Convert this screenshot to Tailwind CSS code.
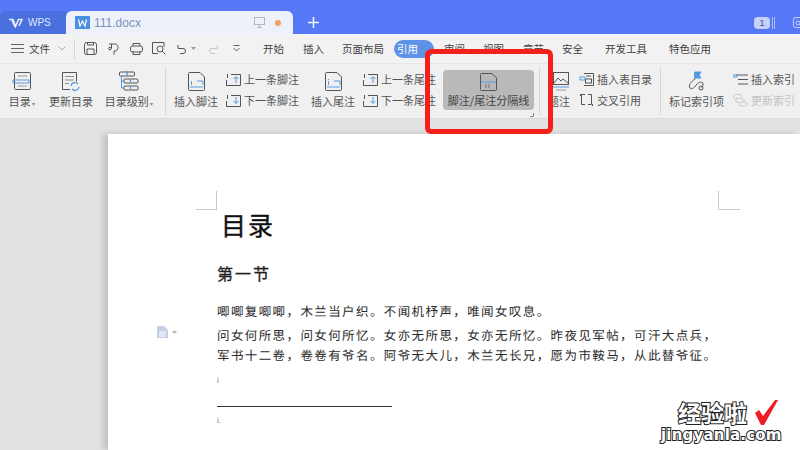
<!DOCTYPE html>
<html lang="zh">

<head>
    <meta charset="UTF-8">
    <meta name="viewport" content="width=device-width, initial-scale=1.0">
    <script src="https://cdn.jsdelivr.net/npm/@tailwindcss/browser@4"></script>
    <title>111.docx</title>
</head>

<body class="relative w-[800px] h-[450px] overflow-hidden bg-[#e2e2e2] font-['Noto_Sans_CJK_SC','Noto_Sans',sans-serif] text-[#444]">

    <!-- Barra de pestañas -->
    <div class="flex items-end h-[34px] bg-[#5778f6]">
        <div class="flex items-center w-[66px] h-[23px] pl-2 gap-[5px] bg-[#4a70de] rounded-tl-md text-[#dfe7fb] text-[10px] font-['Liberation_Sans',sans-serif]">
            <svg class="w-[15px] h-[10px]" viewBox="0 0 15 10" fill="none" stroke="#e6ecfc" stroke-width="1.6"><path d="M1 1.500h4l2.500 7 3-7H14L11 8" /><path d="M4 2 7 9" /></svg>
            <span>WPS</span>
        </div>
        <div class="flex items-center w-[227px] h-[23px] pl-[9px] bg-[#eef1fa] rounded-t-md">
            <svg class="w-[15px] h-[13px]" viewBox="0 0 15 13"><rect width="15" height="13" fill="#4a90e2" /><path d="M3.500 3.500 5 10l2.500-5L10 10l1.500-6.500" fill="none" stroke="#fff" stroke-width="1.200" /></svg>
            <span class="ml-1 text-[12px] text-[#7a93bd] font-['Liberation_Sans',sans-serif]">111.docx</span>
            <svg class="ml-[113px] w-[11px] h-[11px]" viewBox="0 0 11 11" fill="none" stroke="#aeb6c4"><rect x=".5" y=".5" width="10" height="7" /><path d="M5.500 7.500v3M3 10.500h5" /></svg>
            <span class="ml-[10px] w-[6px] h-[6px] rounded-full bg-[#eda35f]"></span>
        </div>
        <svg class="ml-[15px] mb-[6px] w-[11px] h-[11px]" viewBox="0 0 11 11" stroke="#f2f5ff" stroke-width="1.500"><path d="M5.500 0v11M0 5.500h11" /></svg>
        <div class="flex items-center ml-auto mb-[5px]">
            <span class="w-[16px] h-[12px] rounded-sm bg-[#c6d2fa] text-[9px] leading-[12px] text-center text-[#3c4f8c] font-['Liberation_Sans',sans-serif]">1</span>
            <span class="ml-[2px] w-[3px] h-[12px] border-x border-[#aabcf8]"></span>
            <svg class="ml-[18px] w-[7px] h-[12px]" viewBox="0 0 7 12" fill="none" stroke="#c6d2fa"><rect x=".5" y=".5" width="9" height="10" rx="2" /><circle cx="5" cy="6" r="2" /></svg>
        </div>
    </div>

    <!-- Barra de menú -->
    <div class="flex items-center h-[30px] bg-[#f2f2f2] border-b border-[#e6e6e6] text-[10.500px] text-[#3f3f3f]">
        <svg class="ml-[11px] w-[13px] h-[9px]" viewBox="0 0 13 9" stroke="#666"><path d="M0 .5h13M0 4.500h13M0 8.500h13" /></svg>
        <span class="ml-[5px] w-[22px] whitespace-nowrap">文件</span>
        <svg class="ml-[7px] w-[8px] h-[5px]" viewBox="0 0 8 5" fill="none" stroke="#aaa"><path d="M.5.5 4 4 7.500.5" /></svg>
        <span class="ml-[8px] w-px h-[20px] bg-[#d4d4d4]"></span>
        <svg class="ml-[9px] w-[13px] h-[13px]" viewBox="0 0 13 13" fill="none" stroke="#555"><rect x=".5" y=".5" width="12" height="12" rx="2" /><path d="M3 12.500V7h7v5.500M3.500 .5v2.500h6V.5" /></svg>
        <svg class="ml-[11px] w-[13px] h-[13px]" viewBox="0 0 13 13" fill="none" stroke="#555"><path d="M1 2h7a4 4 0 0 1 0 7H6v3.500M3.500 2v4.500" /><circle cx="2" cy="6.500" r="1.300" /></svg>
        <svg class="ml-[9px] w-[13px] h-[12px]" viewBox="0 0 13 12" fill="none" stroke="#555"><rect x=".5" y="3" width="12" height="6" rx="2" /><path d="M3 3V.5h7V3M3 8v3.500h7V8" /></svg>
        <svg class="ml-[9px] w-[14px] h-[13px]" viewBox="0 0 14 13" fill="none" stroke="#555"><path d="M12 5V.5H.5v11H6" /><circle cx="8" cy="7" r="3" /><path d="m10 9 3.500 3.500" /></svg>
        <svg class="ml-[11px] w-[11px] h-[10px]" viewBox="0 0 11 10" fill="none" stroke="#555"><path d="M1 1v3.500h5a2.500 2.500 0 0 1 0 5H3" /></svg>
        <svg class="ml-[3px] w-[5px] h-[3px]" viewBox="0 0 5 3" fill="#999"><path d="M0 0h5L2.500 3z" /></svg>
        <svg class="ml-[11px] w-[11px] h-[10px]" viewBox="0 0 11 10" fill="none" stroke="#c4c4c4"><path d="M10 1v3.500H5a2.500 2.500 0 0 0 0 5h3" /></svg>
        <svg class="ml-[15px] w-[7px] h-[7px]" viewBox="0 0 7 7" fill="none" stroke="#666"><path d="M.5.5h6M.5 3 3.500 6 6.500 3" /></svg>
        <span class="ml-[23px] w-[22px] whitespace-nowrap">开始</span>
        <span class="ml-[18px] w-[22px] whitespace-nowrap">插入</span>
        <span class="ml-[17px] w-[42px] whitespace-nowrap">页面布局</span>
        <span class="ml-[10px] w-[40px] h-[18px] pl-[3px] leading-[18px] whitespace-nowrap rounded-full bg-[#5f93e8] text-white">引用</span>
        <span class="ml-[10px] w-[21px] whitespace-nowrap">审阅</span>
        <span class="ml-[18px] w-[22px] whitespace-nowrap">视图</span>
        <span class="ml-[18px] w-[22px] whitespace-nowrap">章节</span>
        <span class="ml-[17px] w-[22px] whitespace-nowrap">安全</span>
        <span class="ml-[21px] w-[43px] whitespace-nowrap">开发工具</span>
        <span class="ml-[21px] w-[43px] whitespace-nowrap">特色应用</span>
    </div>

    <!-- Cinta de opciones -->
    <div class="flex items-stretch h-[55px] bg-[#f0f0f0] border-b border-[#dadada] text-[11px] text-[#555] whitespace-nowrap">
        <div class="ml-[8px] w-[28px] pt-[8px] flex flex-col items-center">
            <svg class="w-[20px] h-[19px]" viewBox="0 0 20 19" fill="none" stroke="#555"><rect x="2.500" y=".5" width="16" height="17" rx="1" /><path d="M6 4h9" stroke="#999" /><path d="M1 8h16v3H1z" stroke="#5b9be6" /><path d="M6 14h9" stroke="#999" /></svg>
            <span class="mt-[3px] leading-[15px]">目录<span class="text-[6px] text-[#888]"> ▾</span></span>
        </div>
        <div class="ml-[13px] w-[44px] pt-[8px] flex flex-col items-center">
            <svg class="w-[20px] h-[19px]" viewBox="0 0 20 19" fill="none" stroke="#555"><path d="M9 17.500H1.500V.5h14v9" /><path d="M4 4.500h9M4 8h9M4 11.500h4" stroke="#888" /><path d="M10 14a4 4 0 0 1 7-2M18 15a4 4 0 0 1-7 2" stroke="#4f9ae6" stroke-width="1.300" /></svg>
            <span class="mt-[3px] leading-[15px]">更新目录</span>
        </div>
        <div class="ml-[11px] w-[50px] pt-[7px] flex flex-col items-center">
            <svg class="w-[20px] h-[20px]" viewBox="0 0 20 20" fill="none" stroke="#555"><rect x=".5" y="1" width="15" height="4" rx="1" /><rect x="5" y="8" width="14" height="4" rx="1" /><rect x="5" y="15" width="14" height="4" rx="1" /><path d="M2.500 5v12H5M2.500 10H5" stroke="#4f9ae6" /><path d="M8 0v5M11.500 9v2M11.500 16v2" stroke="#4f9ae6" stroke-width="1.300" /></svg>
            <span class="mt-[3px] leading-[15px]">目录级别<span class="text-[6px] text-[#888]"> ▾</span></span>
        </div>
        <span class="ml-[11px] my-[3px] w-px bg-[#d6d6d6]"></span>
        <div class="ml-[8px] w-[44px] pt-[8px] flex flex-col items-center">
            <svg class="w-[17px] h-[19px]" viewBox="0 0 17 19" fill="none" stroke="#555"><path d="M.5 1.500a1 1 0 0 1 1-1H12L16.500 5v12.500a1 1 0 0 1-1 1h-14a1 1 0 0 1-1-1z" /><path d="M2 15h13" stroke="#5b9be6" /><path d="M3.500 9v4M9 9h6v4" stroke="#5b9be6" /></svg>
            <span class="mt-[3px] leading-[15px]">插入脚注</span>
        </div>
        <div class="ml-[8px] w-[73px] pt-[8px] flex flex-col gap-[6px]">
            <div class="flex items-center h-[15px] gap-[3px]">
                <svg class="w-[15px] h-[13px]" viewBox="0 0 15 13" fill="none" stroke="#555"><path d="M5 1.500h9.500v11H.5V7M1.500 1v4" /><path d="M10 10V4M7.500 6 10 3.500 12.500 6" stroke="#4f9ae6" /></svg>
                <span>上一条脚注</span>
            </div>
            <div class="flex items-center h-[15px] gap-[3px]">
                <svg class="w-[15px] h-[13px]" viewBox="0 0 15 13" fill="none" stroke="#555"><path d="M5 1.500h9.500v11H.5V7M1.500 1v4" /><path d="M10 3v6M7.500 7 10 9.500 12.500 7" stroke="#4f9ae6" /></svg>
                <span>下一条脚注</span>
            </div>
        </div>
        <div class="ml-[12px] w-[44px] pt-[8px] flex flex-col items-center">
            <svg class="w-[17px] h-[19px]" viewBox="0 0 17 19" fill="none" stroke="#555"><path d="M.5 1.500a1 1 0 0 1 1-1H12L16.500 5v12.500a1 1 0 0 1-1 1h-14a1 1 0 0 1-1-1z" /><path d="M2 15h13" stroke="#5b9be6" /><path d="M3.500 7v1M3.500 9v4M9 9h6v4" stroke="#5b9be6" /></svg>
            <span class="mt-[3px] leading-[15px]">插入尾注</span>
        </div>
        <div class="ml-[8px] w-[73px] pt-[8px] flex flex-col gap-[6px]">
            <div class="flex items-center h-[15px] gap-[3px]">
                <svg class="w-[15px] h-[13px]" viewBox="0 0 15 13" fill="none" stroke="#555"><path d="M5 1.500h9.500v11H.5V7M1.500 1v4" /><path d="M10 10V4M7.500 6 10 3.500 12.500 6" stroke="#4f9ae6" /></svg>
                <span>上一条尾注</span>
            </div>
            <div class="flex items-center h-[15px] gap-[3px]">
                <svg class="w-[15px] h-[13px]" viewBox="0 0 15 13" fill="none" stroke="#555"><path d="M5 1.500h9.500v11H.5V7M1.500 1v4" /><path d="M10 3v6M7.500 7 10 9.500 12.500 7" stroke="#4f9ae6" /></svg>
                <span>下一条尾注</span>
            </div>
        </div>
        <!-- Botón activo -->
        <div class="ml-[7px] mt-[6px] w-[91px] h-[40px] pt-[3px] flex flex-col items-center rounded bg-[#b9b9b9] text-[#444]">
            <svg class="w-[17px] h-[18px]" viewBox="0 0 17 18" fill="none" stroke="#555"><path d="M.5 1.500a1 1 0 0 1 1-1H12L16.500 5v11.500a1 1 0 0 1-1 1h-14a1 1 0 0 1-1-1z" /><path d="M1 9h15" stroke="#5b9be6" /><path d="M6 11v4M9 11v4" stroke="#777" /></svg>
            <span class="mt-[2px] leading-[15px]">脚注/尾注分隔线</span>
        </div>
        <span class="ml-[5px] my-[3px] w-px bg-[#d6d6d6]"></span>
        <div class="ml-[7px] w-[23px] pt-[8px] flex flex-col items-end">
            <svg class="mr-[1px] w-[16px] h-[19px]" viewBox="0 0 16 19" fill="none" stroke="#555"><rect x=".5" y=".5" width="15" height="12" /><path d="m1 11 4-5 3 3 2-2 5 4" /><path d="M0 15h16" stroke="#5b9be6" /><path d="M3 18h10" stroke="#999" /></svg>
            <span class="mt-[3px] leading-[15px]">题注</span>
        </div>
        <div class="ml-[9px] w-[74px] pt-[8px] flex flex-col gap-[6px]">
            <div class="flex items-center h-[15px] gap-[3px]">
                <svg class="w-[15px] h-[13px]" viewBox="0 0 15 13" fill="none" stroke="#555"><path d="M5 .5h9.500v12H5" /><rect x="6.500" y="6" width="6" height="4" /><path d="M7 3h5" /><path d="M1 4h5v3H1z" stroke="#4f9ae6" /></svg>
                <span>插入表目录</span>
            </div>
            <div class="flex items-center h-[15px] gap-[3px]">
                <svg class="w-[15px] h-[13px]" viewBox="0 0 15 13" fill="none" stroke="#555"><path d="M6 .5H2.500v10H6M9 .5h3.500v10H9" /><path d="M1 1h1M13 11h1" stroke-width="2" /></svg>
                <span>交叉引用</span>
            </div>
        </div>
        <span class="ml-[7px] my-[3px] w-px bg-[#d6d6d6]"></span>
        <div class="ml-[8px] w-[55px] pt-[7px] flex flex-col items-center">
            <svg class="w-[20px] h-[20px]" viewBox="0 0 20 20" fill="none" stroke="#555"><path d="M8 8V1" /><path d="M8 1h6l-2 3 2 3H8z" fill="#4f9ae6" stroke="#4f9ae6" /><path d="M8 8c-4 3-7 6-5 9 2 2 5-1 7-4 2-2 6-3 6 0 0 2-1 3-2 3" /><circle cx="14" cy="17" r="2" /></svg>
            <span class="mt-[3px] leading-[15px]">标记索引项</span>
        </div>
        <div class="ml-[9px] pt-[8px] flex flex-col gap-[6px]">
            <div class="flex items-center h-[15px] gap-[3px]">
                <svg class="w-[15px] h-[13px]" viewBox="0 0 15 13" fill="none" stroke="#555"><path d="M3 2h12M5 6.500h10M5 11h10" /><path d="M0 2h4v2H0z" stroke="#4f9ae6" /></svg>
                <span>插入索引</span>
            </div>
            <div class="flex items-center h-[15px] gap-[3px] text-[#c2c2c2]">
                <svg class="w-[15px] h-[13px]" viewBox="0 0 15 13" fill="none" stroke="#c8c8c8"><rect x=".5" y=".5" width="8" height="4" rx="2" /><rect x="6" y="8" width="8" height="4" rx="2" /><path d="M3 5v3h3M11 8V5H8" /></svg>
                <span>更新索引</span>
            </div>
        </div>
    </div>

    <!-- Área del documento -->
    <div class="flex h-[331px] pt-[15px]">
        <div class="w-[108px] shrink-0"></div>
        <div class="relative flex-1 bg-white pl-[109px] shadow-[-5px_0_6px_rgba(0,0,0,0.14)] text-[#222]">
            <!-- Marcas de margen -->
            <div class="absolute left-[88px] top-[57px] w-[21px] h-[19px] border-r border-b border-[#c8c8c8]"></div>
            <div class="absolute left-[610px] top-[57px] w-[22px] h-[19px] border-l border-b border-[#c8c8c8]"></div>
            <!-- Icono de margen -->
            <div class="absolute left-[49px] top-[192px] flex items-center gap-[4px]">
                <svg class="w-[11px] h-[12px]" viewBox="0 0 11 12"><path d="M0 0h7l4 4v8H0z" fill="#c3d0e6" /><path d="M2 6h7M2 8h7M2 10h7" stroke="#fff" /></svg>
                <svg class="w-[5px] h-[3px]" viewBox="0 0 5 3" fill="#b4b4b4"><path d="M0 0h5L2.500 3z" /></svg>
            </div>

            <h1 class="pt-[72px] pl-[4px] h-[126px] text-[25px] leading-[36px] tracking-[2px] font-normal text-[#111] [-webkit-text-stroke:0.4px_#111]">目录</h1>
            <h2 class="mt-[-1px] h-[37px] text-[16px] leading-[28px] tracking-[2px] font-normal text-[#222] [-webkit-text-stroke:0.3px_#222]">第一节</h2>
            <div class="mt-[5px] text-[12.500px] tracking-[1.400px] whitespace-nowrap text-[#2a2a2a] [text-rendering:geometricPrecision]">
                <p class="h-[24px] leading-[20px]">唧唧复唧唧，木兰当户织。不闻机杼声，唯闻女叹息。</p>
                <p class="h-[20px] leading-[20px]">问女何所思，问女何所忆。女亦无所思，女亦无所忆。昨夜见军帖，可汗大点兵，</p>
                <p class="h-[20px] leading-[20px]">军书十二卷，卷卷有爷名。阿爷无大儿，木兰无长兄，愿为市鞍马，从此替爷征。</p>
            </div>
            <p class="mt-[9px] h-[14px] text-[8px] leading-[14px] text-[#777] [text-rendering:geometricPrecision] font-['Liberation_Sans',sans-serif]">i</p>
            <div class="mt-[18px] w-[175px] border-t border-[#333]"></div>
            <p class="mt-[7px] text-[8px] leading-[14px] text-[#777] [text-rendering:geometricPrecision] font-['Liberation_Sans',sans-serif]">i.</p>
        </div>
    </div>

    <!-- Recuadro rojo de anotación -->
    <div class="absolute left-[425px] top-[49px] w-[128px] h-[85px] border-[5px] border-[#f4201a] rounded-md">
        <svg class="absolute right-[14px] bottom-[12px] w-[4px] h-[4px]" viewBox="0 0 4 4" fill="none" stroke="#888"><path d="M0 3.500h3.500V0" /></svg>
    </div>

    <!-- Marca de agua -->
    <div class="absolute left-[661px] top-[398px] w-[125px] text-white font-bold">
        <div class="flex items-center pl-[17px]">
            <span class="text-[23px] leading-[28px] [-webkit-text-stroke:2px_#222] [paint-order:stroke_fill] whitespace-nowrap">经验啦</span>
            <svg class="ml-[8px] w-[23px] h-[25px]" viewBox="0 0 23 25"><path d="M0 13 4 10 8 16 20 0h3L9 25H6z" fill="#ee1c25" /></svg>
        </div>
        <div class="text-[15px] leading-[18px] tracking-[.2px] [-webkit-text-stroke:2px_#222] [paint-order:stroke_fill] font-['DejaVu_Sans',sans-serif] whitespace-nowrap">jingyanla.com</div>
    </div>

</body>

</html>
